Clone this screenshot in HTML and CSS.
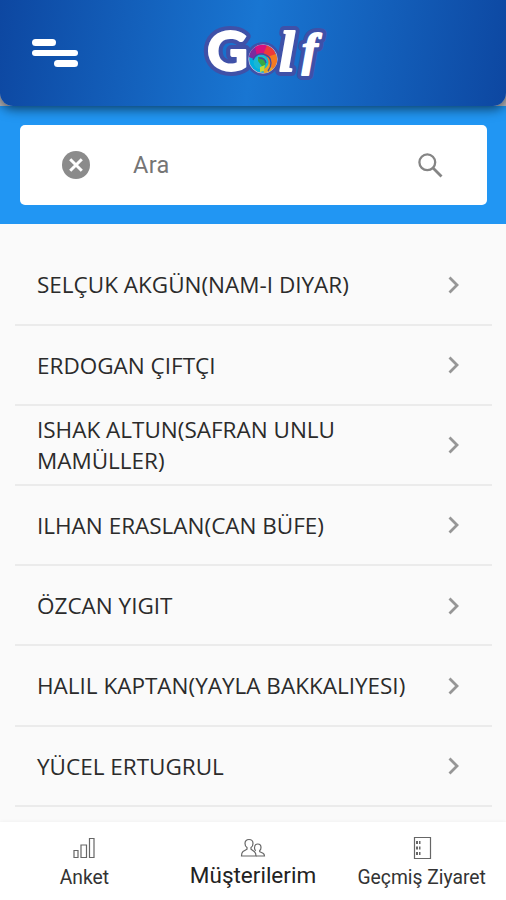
FILE: index.html
```html
<!DOCTYPE html>
<html lang="tr">
<head>
  <meta charset="UTF-8" />
  <meta name="viewport" content="width=device-width, initial-scale=1.0"/>
  <title>Müşterilerim – Golf</title>
  <link rel="stylesheet" href="styles.css">
</head>
<body>
  <div class="header-wrap">
    <header class="header">
      <button class="menu-btn" aria-label="Menü">
        <span class="bar short"></span>
        <span class="bar"></span>
        <span class="bar short right"></span>
      </button>
      <svg class="logo" width="130" height="106" viewBox="198 0 130 106">
        <g class="logo-glow">
          <text class="logo-g" x="207" y="71" textLength="41" lengthAdjust="spacingAndGlyphs">G</text>
          <circle cx="263" cy="59" r="12"/>
          <text class="logo-l" x="279" y="71">l</text>
          <text class="logo-f" x="302" y="65">f</text>
        </g>
        <g class="logo-text">
          <text class="logo-g" x="207" y="71" textLength="41" lengthAdjust="spacingAndGlyphs">G</text>
          <text class="logo-l" x="279" y="71">l</text>
          <text class="logo-f" x="302" y="65">f</text>
        </g>
        <!-- ball -->
        <circle cx="263" cy="59" r="14.3" fill="#00aee0" stroke="#d9b8d8" stroke-width="0.8"/>
        <path d="M249 57a14 14 0 0 1 7-10.500l7 8q-6 0-8 5z" fill="#7b2a9e"/>
        <path d="M255 47a14 14 0 0 1 13-1l-4 9-7 1z" fill="#d5127e"/>
        <path d="M267 45.500a14 14 0 0 1 9 9l-9 3-4-3z" fill="#ee3a3a"/>
        <path d="M276 54a14 14 0 0 1-3 15l-6-6 0-6z" fill="#f57a20"/>
        <path d="M273 69a14 14 0 0 1-9 4l-2-8 5-3z" fill="#e8a32a"/>
        <circle cx="261" cy="62" r="7.500" fill="#18b7d4"/>
        <path d="M258 57q8-1 8 6l-2 6-6-8z" fill="#35a846"/>
        <path d="M260 67l5-2-1 6-4 1z" fill="#c5d93a"/>
        <path d="M253 60q3-7 10-6 8 2 8 9 0 4-3 8M259 58q6 0 7 5" fill="none" stroke="#3d4ba3" stroke-width="1.300"/>
      </svg>
    </header>
  </div>

  <div class="search-area">
    <div class="search-box">
      <svg class="clear-icon" width="28" height="28" viewBox="0 0 28 28">
        <circle cx="14" cy="14" r="14" fill="#8b8b8b"/>
        <path d="M8.200 8.200l11.600 11.600M19.800 8.200L8.200 19.800" stroke="#fff" stroke-width="3"/>
      </svg>
      <span class="placeholder">Ara</span>
      <svg class="search-icon" width="25" height="25" viewBox="0 0 25 25" fill="none" stroke="#858585">
        <circle cx="9.300" cy="9.300" r="7.900" stroke-width="2.300"/>
        <path d="M14.800 14.800l8.700 8.700" stroke-width="2.800"/>
      </svg>
    </div>
  </div>

  <main class="list">
    <div class="item"><span>SELÇUK AKGÜN(NAM-I DIYAR)</span><svg class="chevron" viewBox="0 0 12 18"><path d="M1.500 1.500L9 9l-7.500 7.500"/></svg></div>
    <div class="item"><span>ERDOGAN ÇIFTÇI</span><svg class="chevron" viewBox="0 0 12 18"><path d="M1.500 1.500L9 9l-7.500 7.500"/></svg></div>
    <div class="item"><span>ISHAK ALTUN(SAFRAN UNLU MAMÜLLER)</span><svg class="chevron" viewBox="0 0 12 18"><path d="M1.500 1.500L9 9l-7.500 7.500"/></svg></div>
    <div class="item"><span>ILHAN ERASLAN(CAN BÜFE)</span><svg class="chevron" viewBox="0 0 12 18"><path d="M1.500 1.500L9 9l-7.500 7.500"/></svg></div>
    <div class="item"><span>ÖZCAN YIGIT</span><svg class="chevron" viewBox="0 0 12 18"><path d="M1.500 1.500L9 9l-7.500 7.500"/></svg></div>
    <div class="item"><span>HALIL KAPTAN(YAYLA BAKKALIYESI)</span><svg class="chevron" viewBox="0 0 12 18"><path d="M1.500 1.500L9 9l-7.500 7.500"/></svg></div>
    <div class="item"><span>YÜCEL ERTUGRUL</span><svg class="chevron" viewBox="0 0 12 18"><path d="M1.500 1.500L9 9l-7.500 7.500"/></svg></div>
  </main>

  <nav class="tabs">
    <a class="tab">
      <svg width="24" height="24" viewBox="0 0 24 24">
        <path d="M2 14.500h4v7H2zM9 9h5.500v12.500H9zM17.500 2.500H22v19h-4.500z"/>
      </svg>
      <span>Anket</span>
    </a>
    <a class="tab active">
      <svg width="26" height="24" viewBox="0 0 26 24">
        <path d="M9 3.500c-2.500 0-4 1.600-4 3.900 0 1.900.8 3.300 2 4.100v1.700L3 15.500c-1 .8-1.500 2.300-1.500 4.500H16c0-2-.4-3.300-1.500-4.300L11 13.200v-1.700c1.200-.8 2-2.200 2-4.100 0-2.300-1.500-3.900-4-3.900z"/>
        <path d="M14.500 12c0-2.600 1.200-4 3.300-4s3.200 1.400 3.200 3.500c0 1.400-.5 2.400-1.300 3v1.200l3.300 1.500c1 .6 1.500 1.500 1.500 2.800h-8.500M14.500 12c0 1.200.4 2 1.200 2.700"/>
      </svg>
      <span>Müşterilerim</span>
    </a>
    <a class="tab">
      <svg width="24" height="24" viewBox="0 0 24 24">
        <path d="M4.500 1.500H20.500v21H4.500z"/>
        <path class="dots" d="M6 6.500h4.500M6 12h4.500M6 17.500h4.500"/>
      </svg>
      <span>Geçmiş Ziyaret</span>
    </a>
  </nav>
</body>
</html>
```
FILE: styles.css
```css
* {
  box-sizing: border-box;
}

body {
  margin: 0;
  height: 900px;
  display: flex;
  flex-direction: column;
  background-color: #fafafa;
  font-family: Roboto, sans-serif;
  overflow: hidden;
}

/* header */
.header-wrap {
  height: 106px;
  background: #b9bac0;
  flex-shrink: 0;
}

.header {
  position: relative;
  height: 106px;
  display: grid;
  grid-template-columns: 198px 130px 1fr;
  align-items: center;
  background: linear-gradient(98deg, #0d47a1 0%, #1976d2 50%, #0d47a1 100%);
  border-radius: 0 0 13px 13px;
  box-shadow: 0 3px 12px rgba(0, 0, 0, 0.6);
}

.menu-btn {
  display: flex;
  flex-direction: column;
  gap: 4px;
  width: 46px;
  margin-left: 32px;
  padding: 0;
  border: 0;
  background: none;
}

.bar {
  width: 46px;
  height: 6.6px;
  border-radius: 4px;
  background: white;
}

.short {
  width: 24px;
}

.right {
  align-self: flex-end;
}

.logo {
  overflow: visible;
}

.logo-g {
  font: 900 55px Lato, sans-serif;
}

.logo-l {
  font: italic bold 57px "Liberation Serif", serif;
}

.logo-f {
  font: italic bold 47px "Liberation Serif", serif;
}

.logo-text {
  fill: white;
  stroke: white;
  stroke-width: 1.8;
  stroke-linejoin: round;
}

.logo-glow {
  fill: #3f51a8;
  stroke: #3f51a8;
  stroke-width: 10;
  stroke-linejoin: round;
}

/* search */
.search-area {
  height: 118px;
  padding: 19px 19px 0 20px;
  background: #2196f3;
  flex-shrink: 0;
}

.search-box {
  height: 80px;
  display: flex;
  align-items: center;
  padding: 0 44px 0 42px;
  background: white;
  border-radius: 5px;
}

.placeholder {
  flex: 1;
  margin-left: 43px;
  font-size: 23.5px;
  letter-spacing: 0.3px;
  color: #757575;
}

/* customer list */
.list {
  flex: 1;
  min-height: 0;
  padding: 21.4px 14px 0 15px;
}

.item {
  height: 80.2px;
  display: flex;
  align-items: center;
  justify-content: space-between;
  padding: 0.8px 32px 0 22px;
  border-bottom: 2px solid #ebebeb;
  font-family: "Open Sans", sans-serif;
  font-size: 22.5px;
  line-height: 31px;
  color: #2b2b2b;
}

.item span {
  max-width: 385px;
}

.chevron {
  width: 12px;
  height: 18px;
  flex-shrink: 0;
  fill: none;
  stroke: #969696;
  stroke-width: 2.8;
}

/* bottom tabs */
.tabs {
  height: 78px;
  flex-shrink: 0;
  display: grid;
  grid-template-columns: repeat(3, 1fr);
  background: white;
  box-shadow: 0 -1px 3px rgba(0, 0, 0, 0.03);
}

.tab {
  display: flex;
  flex-direction: column;
  align-items: center;
  padding-top: 14px;
  font-size: 19.3px;
  line-height: 35px;
  color: #333;
  white-space: nowrap;
}

.tab svg {
  fill: none;
  stroke: #666;
  stroke-width: 1.2;
  flex-shrink: 0;
}

.tab .dots {
  stroke-width: 3;
  stroke-dasharray: 2 1;
}

.active {
  font-size: 22.5px;
  line-height: 31px;
  color: #222;
}
```
